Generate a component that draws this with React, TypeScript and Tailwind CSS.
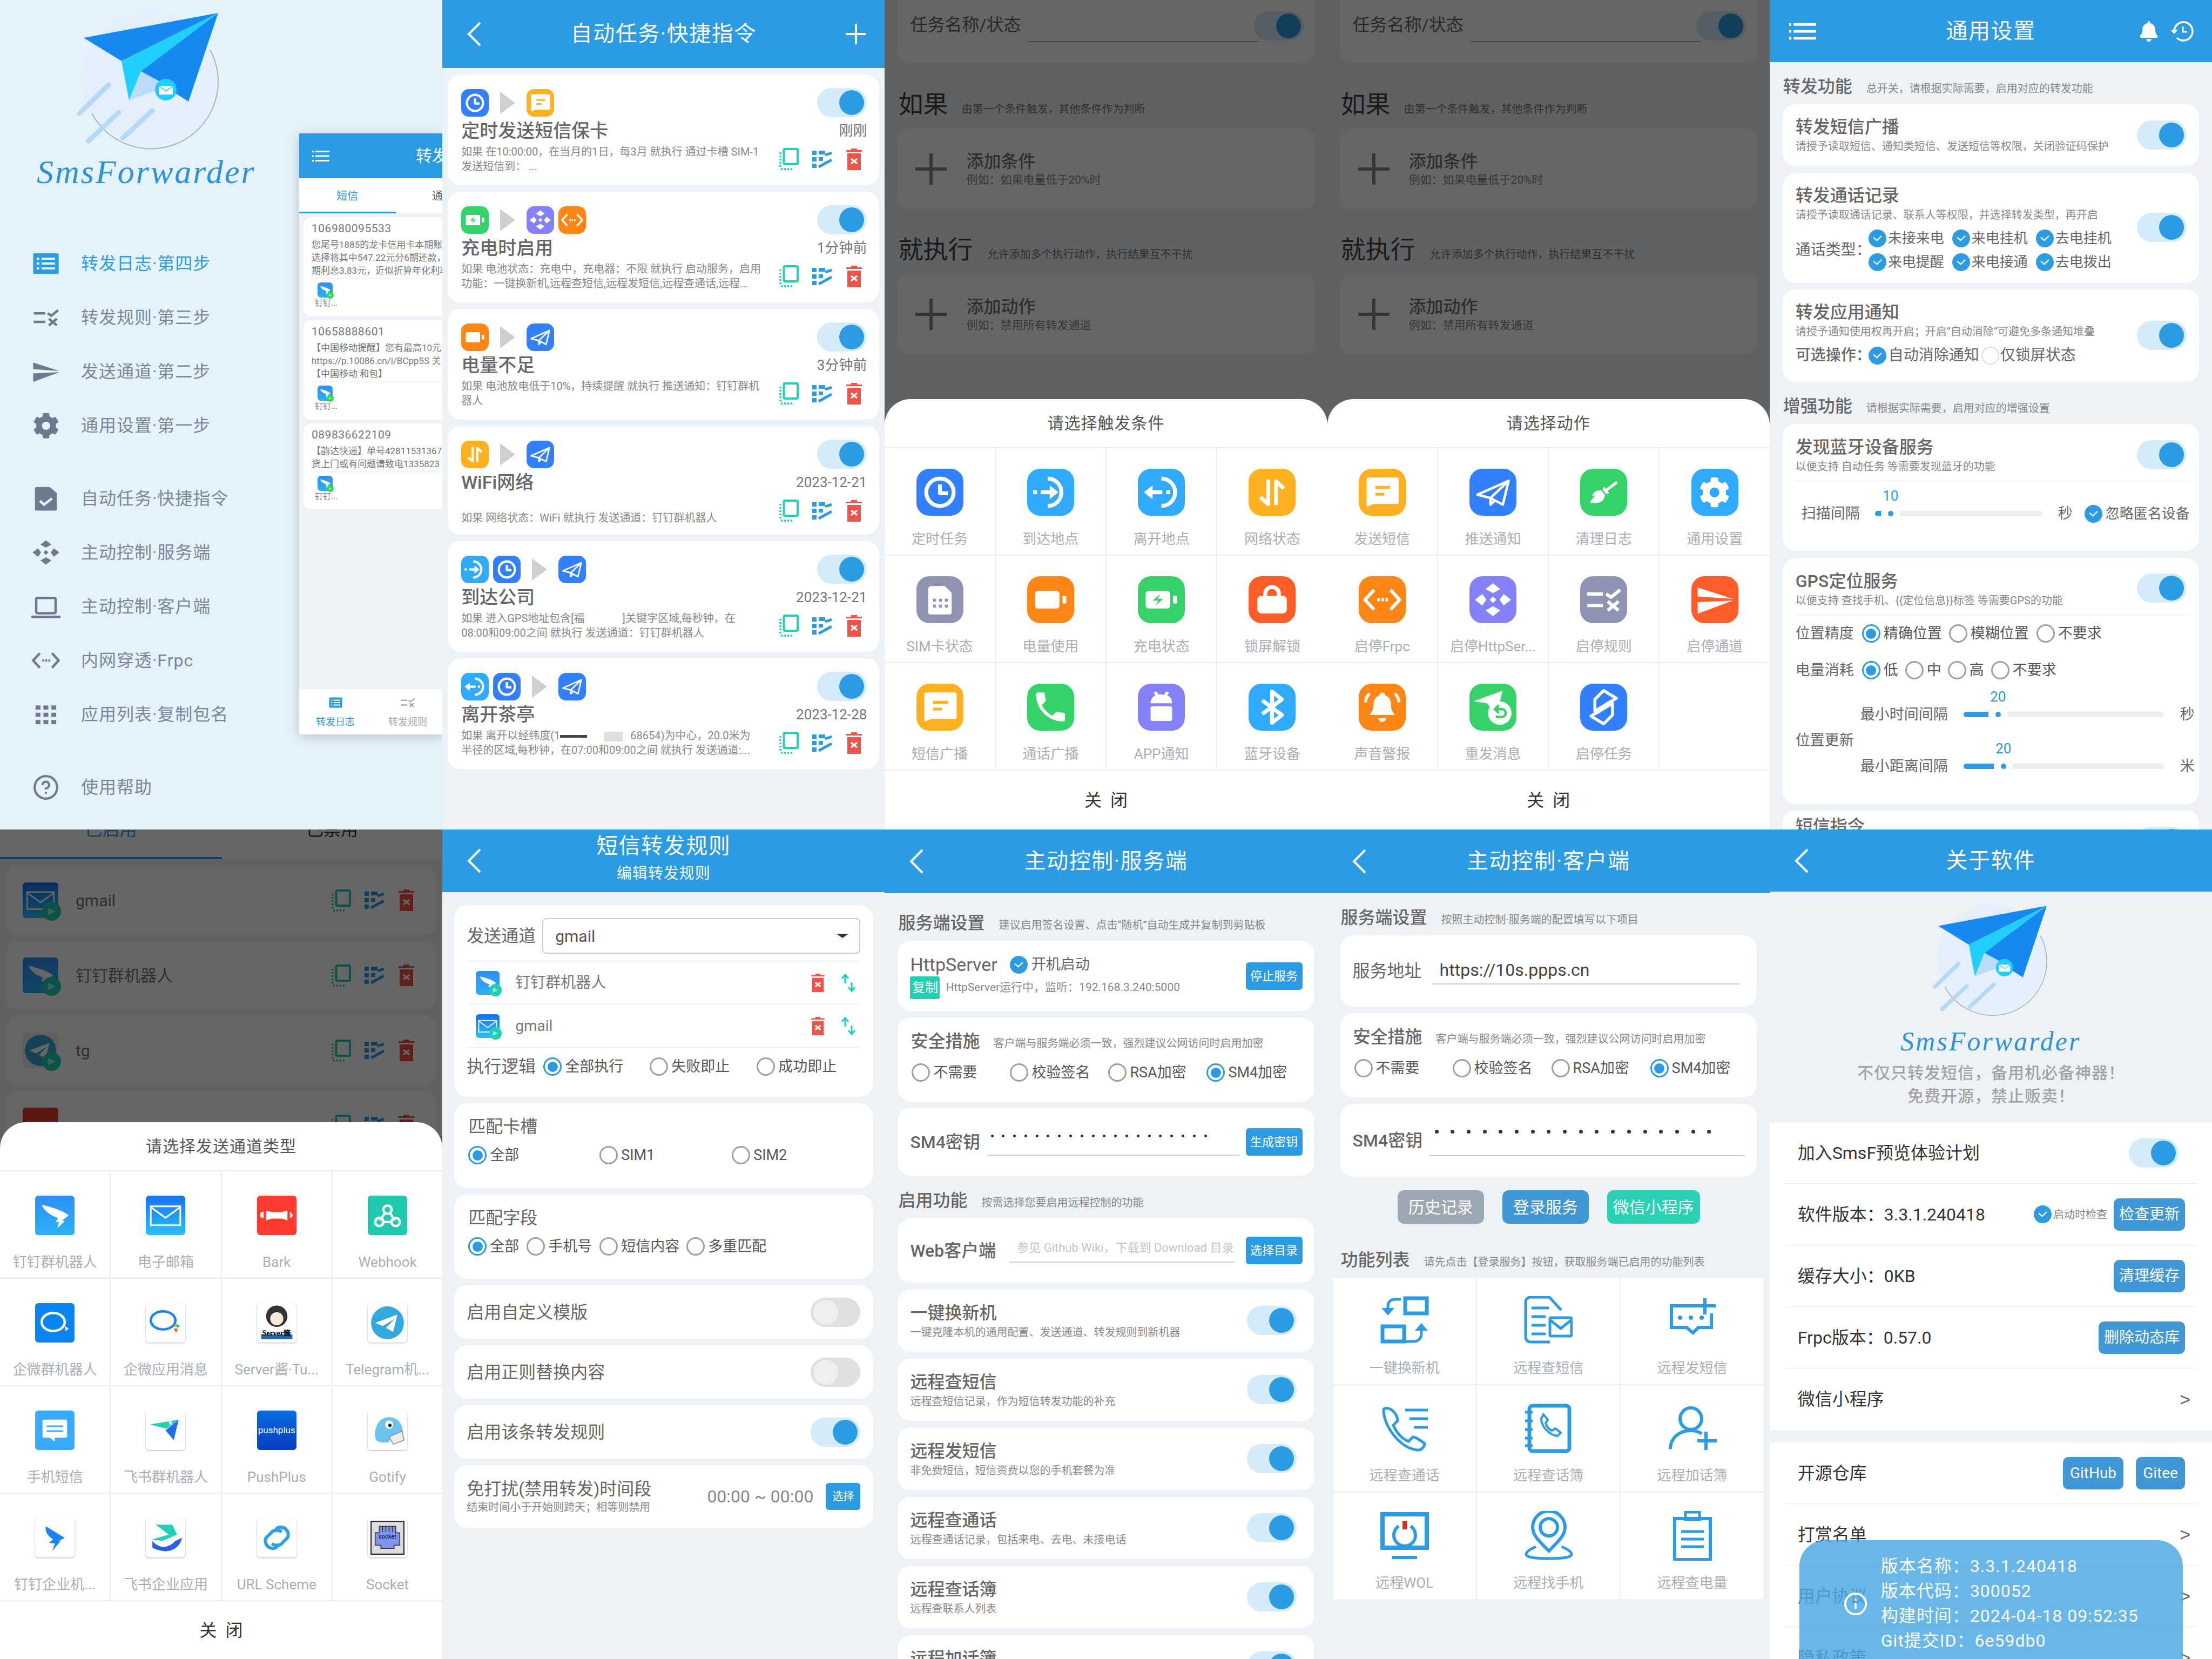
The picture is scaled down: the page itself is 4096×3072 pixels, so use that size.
import type { ReactNode } from "react";
import { FaBell, FaBroom, FaCog } from "react-icons/fa";
import { CircleHelp, Info } from "lucide-react";

const blue = "#2b9ce3";
const narrow = ["frp", "send", "rule", "plane", "http"];

function Glyph({ name, accent = "#3380ff", tile }: { name: string; accent?: string; tile?: boolean }) {
  const line = { fill: "none", stroke: "currentColor", strokeWidth: 4, strokeLinejoin: "round" as const };
  const paths: Record<string, ReactNode> = {
    clock: <><circle cx="24" cy="24" r="14" {...line} /><path d="M24 16v9h8" {...line} /></>,
    arrive: <><path d="M21 10a14 14 0 1 1 0 28" {...line} /><path d="M14 24h12" {...line} /><path d="M23 17l9 7-9 7z" fill="currentColor" /><rect x="6" y="22" width="4" height="4" fill="currentColor" /></>,
    leave: <><path d="M24 10a14 14 0 1 1 0 28" {...line} /><path d="M14 24h11" {...line} /><path d="M6 24l9-7v14z" fill="currentColor" /><rect x="29" y="22" width="4" height="4" fill="currentColor" /></>,
    net: <path d="M20 11v25l-8-7M28 37V13l8 7" {...line} />,
    sim: <><path d="M15 10h14l7 7v20a2 2 0 0 1-2 2H14a2 2 0 0 1-2-2V13a3 3 0 0 1 3-3z" fill="currentColor" /><path d="M17 23h3v3h-3zM23 23h3v3h-3zM29 23h3v3h-3zM17 29h3v3h-3zM23 29h3v3h-3zM29 29h3v3h-3z" fill={accent} /></>,
    battery: <><rect x="8" y="15" width="25" height="18" rx="3" fill="currentColor" /><rect x="36" y="20" width="4" height="8" rx="1" fill="currentColor" /></>,
    charge: <><rect x="8" y="15" width="25" height="18" rx="3" fill="currentColor" /><rect x="36" y="20" width="4" height="8" rx="1" fill="currentColor" /><path d="M23 18l-8 7h6l-3 5 8-7h-6z" fill={accent} /></>,
    lock: <><rect x="9" y="20" width="30" height="18" rx="4" fill="currentColor" /><path d="M17 20v-2a7 7 0 0 1 14 0v2" {...line} /></>,
    sms: <><path d="M10 9h29a2 2 0 0 1 2 2v23a2 2 0 0 1-2 2H15l-7 3V11a2 2 0 0 1 2-2z" fill="currentColor" /><path d="M17 19h15M17 26h9" fill="none" stroke={accent} strokeWidth="3" /></>,
    phone: <path transform="translate(4 4) scale(1.65)" d="M6.62 10.79c1.44 2.83 3.76 5.14 6.59 6.59l2.2-2.2c.27-.27.67-.36 1.02-.24 1.12.37 2.33.57 3.57.57.55 0 1 .45 1 1V20c0 .55-.45 1-1 1-9.39 0-17-7.61-17-17 0-.55.45-1 1-1h3.5c.55 0 1 .45 1 1 0 1.25.2 2.45.57 3.57.11.35.03.74-.25 1.02l-2.2 2.2z" fill="currentColor" />,
    android: <><path d="M13 20c0-4 2-7 5-8l-2-3 3-1 2 3h6l2-3 3 1-2 3c3 1 5 4 5 8z" fill="currentColor" /><rect x="13" y="23" width="22" height="15" rx="2" fill="currentColor" /></>,
    bluetooth: <path d="M14 17l20 15-10 8V8l10 8-20 15" {...line} />,
    plane: <><path d="M5 27L43 10l-7 29-15-8z" {...line} strokeWidth={3} /><path d="M43 10L21 31v8l5-5" {...line} strokeWidth={3} /></>,
    frp: <><path d="M14 12L3 24l11 12M34 12l11 12-11 12" {...line} /><path d="M18 22h3v4h-3zM23 22h3v4h-3zM28 22h3v4h-3z" fill="currentColor" /></>,
    http: <path d="M24 4l9 7-9 5-9-5zM24 44l-9-7 9-5 9 5zM2 24l9-7 5 7-5 7zM46 24l-9-7-5 7 5 7zM24 20l4 4-4 4-4-4z" fill="currentColor" />,
    rule: <><path d="M4 17h19M4 31h19" {...line} /><path d="M27 17l6 4 11-9M29 26l13 11M42 26L29 37" {...line} /></>,
    send: <path d="M3 9l43 14-43-3zM3 27l43-2-43 16z" fill="currentColor" />,
    bell: <><path d="M24 9a3 3 0 0 1 3 3c5 2 6 6 6 10 0 6 3 8 4 10H11c1-2 4-4 4-10 0-4 1-8 6-10a3 3 0 0 1 3-3zM20 35h8a4 4 0 0 1-8 0z" fill="currentColor" /><path d="M7 19c0-4 2-7 4-9M41 19c0-4-2-7-4-9" {...line} strokeWidth={3} /></>,
    resend: <><path d="M4 18L34 7l-4 15-9 2-3-4z" fill="currentColor" /><circle cx="31" cy="30" r="12" fill="currentColor" /><path d="M28 26h5a4 4 0 0 1 0 8h-6M30 22l-4 4 4 4" fill="none" stroke={accent} strokeWidth="2.5" /></>,
    task: <path d="M24 7l13 8-9 5-13 8V16zM24 41l-13-8 9-5 13-8v12z" {...line} strokeWidth={3} />,
    list: <><rect x="3" y="7" width="42" height="34" rx="2" fill="currentColor" /><path d="M9 16h4M9 24h4M9 32h4M17 16h22M17 24h22M17 32h22" stroke={accent} strokeWidth="3.5" /></>,
    doc: <><path d="M9 5h21l12 10v26a3 3 0 0 1-3 3H9a3 3 0 0 1-3-3V8a3 3 0 0 1 3-3z" fill="currentColor" /><path d="M14 28l7 6 13-10" fill="none" stroke={accent} strokeWidth="4" /></>,
    laptop: <><rect x="8" y="10" width="32" height="25" rx="2" {...line} /><path d="M0 41h48" {...line} /></>,
    apps: <path d="M7 9h8v7H7zM20 9h8v7h-8zM33 9h8v7h-8zM7 21h8v7H7zM20 21h8v7h-8zM33 21h8v7h-8zM7 33h8v7H7zM20 33h8v7h-8zM33 33h8v7h-8z" fill="currentColor" />,
  };
  if (name === "broom") return <FaBroom className="w-[58%] h-[58%]" />;
  if (name === "gear") return <FaCog className={tile ? "w-[66%] h-[66%]" : "w-[90%] h-[90%]"} />;
  const small = tile && narrow.includes(name);
  return <svg viewBox="0 0 48 48" className={small ? "w-[84%] h-[84%]" : "w-full h-full"}>{paths[name]}</svg>;
}

type TileDef = [string, string, string];
const T: Record<string, TileDef> = {
  clock: ["bg-[#3380ff]", "clock", "#3380ff"],
  arrive: ["bg-[#30aaff]", "arrive", "#30aaff"],
  leave: ["bg-[#30aaff]", "leave", "#30aaff"],
  net: ["bg-[#ffb11f]", "net", "#ffb11f"],
  sim: ["bg-[#8f94b3]", "sim", "#8f94b3"],
  battery: ["bg-[#ff8614]", "battery", "#ff8614"],
  charge: ["bg-[#35d26a]", "charge", "#35d26a"],
  lock: ["bg-[#ff5c28]", "lock", "#ff5c28"],
  sms: ["bg-[#ffb11f]", "sms", "#ffb11f"],
  phone: ["bg-[#35d26a]", "phone", "#35d26a"],
  android: ["bg-[#8481fb]", "android", "#8481fb"],
  bluetooth: ["bg-[#30aaff]", "bluetooth", "#30aaff"],
  plane: ["bg-[#3380ff]", "plane", "#3380ff"],
  broom: ["bg-[#35d26a]", "broom", "#35d26a"],
  gear: ["bg-[#30aaff]", "gear", "#30aaff"],
  frp: ["bg-[#ff8614]", "frp", "#ff8614"],
  http: ["bg-[#8481fb]", "http", "#8481fb"],
  rule: ["bg-[#8f94b3]", "rule", "#8f94b3"],
  send: ["bg-[#ff5c28]", "send", "#ff5c28"],
  bell: ["bg-[#ff8614]", "bell", "#ff8614"],
  resend: ["bg-[#35d26a]", "resend", "#35d26a"],
  task: ["bg-[#3380ff]", "task", "#3380ff"],
};

function Tile({ id, size = "w-[87px] h-[87px] rounded-[24px]" }: { id: string; size?: string }) {
  const [bg, name, accent] = T[id];
  return (
    <div className={`${bg} ${size} flex items-center justify-center text-white`}>
      <Glyph name={name} accent={accent} tile />
    </div>
  );
}

function Logo({ className }: { className: string }) {
  return (
    <svg viewBox="0 0 270 260" className={className}>
      <circle cx="137" cy="127" r="124" fill="#e3effb" />
      <path d="M249 72A124 124 0 0 1 30 190" fill="none" stroke="#a9b4bd" strokeWidth="2" />
      <path d="M7 190l54-53M24 241l56-53M87 236l55-51" stroke="#b4d8f6" strokeWidth="9" strokeLinecap="round" />
      <path d="M15 50L264 4 85 93z" fill="#1589f0" />
      <path d="M85 93L264 4 121 112 99 166z" fill="#1fd0ff" />
      <path d="M264 4l-55 164-88-56z" fill="#1589f0" />
      <path d="M121 112l-22 54 72-27z" fill="#b9dcfb" />
      <ellipse cx="167" cy="146" rx="20" ry="20" fill="#1fd0ff" />
      <rect x="154" y="139" width="26" height="16" rx="2" fill="#fff" />
      <path d="M154 140l13 8 13-8" fill="none" stroke="#1fd0ff" strokeWidth="1.5" />
    </svg>
  );
}

function Header({ title, sub, h = "h-[116px]", right, menu }: { title: string; sub?: string; h?: string; right?: ReactNode; menu?: boolean }) {
  return (
    <div className={`${h} bg-[#2b9ce3] text-white flex items-center shrink-0`}>
      <div className="w-[120px] pl-[36px] flex items-center">
        {menu ? (
          <svg viewBox="0 0 50 20" className="w-[50px] h-[34px]" preserveAspectRatio="none"><path d="M0 1h4v3H0zM0 8.5h4v3H0zM0 16h4v3H0zM8 1h42v3H8zM8 8.5h42v3H8zM8 16h42v3H8z" fill="#fff" /></svg>
        ) : (
          <svg viewBox="0 0 26 46" className="ml-[10px] w-[26px] h-[46px]"><path d="M24 2L3 23l21 21" fill="none" stroke="#fff" strokeWidth="4" /></svg>
        )}
      </div>
      <div className="flex-1 text-center">
        <div className="text-[40px] leading-[48px] tracking-[1.5px] whitespace-nowrap">{title}</div>
        {sub && <div className="text-[28px] leading-[54px] tracking-[1px]">{sub}</div>}
      </div>
      <div className="w-[120px] flex justify-end pr-[36px]">{right}</div>
    </div>
  );
}

function Card({ className = "", children }: { className?: string; children: ReactNode }) {
  return <div className={`bg-white rounded-[24px] mb-[12px] mx-[24px] ${className}`}>{children}</div>;
}

function Section({ title, sub, className = "" }: { title: string; sub: string; className?: string }) {
  return (
    <div className={`flex items-baseline h-[40px] mb-[13px] pl-[25px] ${className}`}>
      <span className="text-[32px] leading-[40px] text-[#666] font-medium">{title}</span>
      <span className="text-[20px] ml-[26px] text-[#888]">{sub}</span>
    </div>
  );
}

function Toggle({ on = true, className = "" }: { on?: boolean; className?: string }) {
  return (
    <div className={`w-[92px] h-[54px] rounded-full shrink-0 flex items-center px-[5px] ${on ? "bg-[#d4ebfa] justify-end" : "bg-[#e0e0e0] justify-start"} ${className}`}>
      <div className={`w-[46px] h-[46px] rounded-full ${on ? "bg-[#2b9ce3]" : "bg-[#efefef]"}`} />
    </div>
  );
}

function Check({ on = true }: { on?: boolean }) {
  if (!on) return <div className="w-[33px] h-[33px] rounded-full border-[2px] border-[#ddd] shrink-0" />;
  return (
    <div className="w-[33px] h-[33px] rounded-full bg-[#2b9ce3] shrink-0 flex items-center justify-center">
      <svg viewBox="0 0 20 14" className="w-[19px] h-[13px]"><path d="M2 5l7 6 9-9" fill="none" stroke="#fff" strokeWidth="2.5" /></svg>
    </div>
  );
}

function Radio({ label, on, w }: { label: string; on?: boolean; w?: string }) {
  return (
    <div className={`flex items-center gap-[6px] text-[27px] text-[#555] whitespace-nowrap ${w ?? ""}`}>
      <div className={`w-[34px] h-[34px] rounded-full border-[3px] flex items-center justify-center shrink-0 ${on ? "border-[#2b9ce3]" : "border-[#a0a0a0]"}`}>
        {on && <div className="w-[19px] h-[19px] rounded-full bg-[#2b9ce3]" />}
      </div>
      {label}
    </div>
  );
}

function CopyIcon() {
  return (
    <svg viewBox="0 0 36 41" className="w-[36px] h-[41px]">
      <rect x="8.500" y="2" width="25.500" height="28" rx="2" fill="none" stroke="#1fd0b2" strokeWidth="4" />
      <path d="M2 8v3M2 14v3M2 20v3M2 26v3M2 32v3M3 39h3M9 39h3M15 39h3M21 39h3" stroke="#1fd0b2" strokeWidth="3.500" />
    </svg>
  );
}
function EditIcon() {
  return (
    <svg viewBox="0 0 36 34" className="w-[36px] h-[34px]">
      <path d="M0 1h8v8H0zM0 13h8v8H0zM0 25h8v8H0zM12 1h12v7H12zM12 13h8v7h-8z" fill="#2b9ce3" />
      <path d="M12 31l24-13M24 9l12-4" stroke="#2b9ce3" strokeWidth="5" />
    </svg>
  );
}
function DelIcon({ className = "w-[29px] h-[40px]" }: { className?: string }) {
  return (
    <svg viewBox="0 0 29 40" className={className}>
      <path d="M9 0h11v3h9v3H0V3h9z" fill="#f0534a" />
      <path d="M2 9h25v31H2z" fill="#f0534a" />
      <path d="M9 19l11 9M20 19L9 28" stroke="#fff" strokeWidth="3.5" />
    </svg>
  );
}
function Actions({ className }: { className: string }) {
  return (
    <div className={`flex items-center ${className}`}>
      <CopyIcon />
      <div className="ml-[25px]"><EditIcon /></div>
      <div className="ml-[27px]"><DelIcon /></div>
    </div>
  );
}

function Drawer() {
  const items: [string, string, string][][] = [
    [["list", "转发日志·第四步", "a"], ["rule", "转发规则·第三步", ""], ["send", "发送通道·第二步", ""], ["gear", "通用设置·第一步", ""]],
    [["doc", "自动任务·快捷指令", ""], ["http", "主动控制·服务端", ""], ["laptop", "主动控制·客户端", ""], ["frp", "内网穿透·Frpc", ""], ["apps", "应用列表·复制包名", ""]],
    [["help", "使用帮助", ""]],
  ];
  return (
    <div className="w-[554px] shrink-0">
      <div className="h-[438px] pt-[20px] pl-[140px]">
        <Logo className="w-[270px] h-[260px]" />
        <div className="-ml-[72px] text-[62px] leading-[76px] italic text-[#2f90dc] tracking-[3px] [font-family:'Liberation_Serif',serif]">SmsForwarder</div>
      </div>
      {items.map((group, i) => (
        <div key={i} className="mb-[35px]">
          {group.map(([icon, label, active]) => (
            <div key={label} className={`h-[100px] flex items-center pl-[58px] ${active ? "text-[#2b9ce3]" : "text-[#6a7a90]"}`}>
              <div className="w-[54px] h-[54px] flex items-center justify-center shrink-0">
                {icon === "help" ? <CircleHelp className="w-[50px] h-[50px]" strokeWidth={2} /> : <Glyph name={icon} accent="#e4f2fb" />}
              </div>
              <span className={`ml-[38px] text-[32px] tracking-[1px] whitespace-nowrap ${active ? "" : "text-[#7a8798]"}`}>{label}</span>
            </div>
          ))}
        </div>
      ))}
    </div>
  );
}

function Preview() {
  const msgs = [
    { h: "h-[184px]", l: ["106980095533", "您尾号1885的龙卡信用卡本期账单", "选择将其中547.22元分6期还款，每", "期利息3.83元，近似折算年化利率"] },
    { h: "h-[184px]", l: ["10658888601", "【中国移动提醒】您有最高10元", "https://p.10086.cn/i/BCpp5S 关", "【中国移动 和包】"] },
    { h: "h-[159px]", l: ["089836622109", "【韵达快递】单号42811531367", "货上门或有问题请致电1335823"] },
  ];
  return (
    <div className="flex-1 min-w-0 mt-[247px] h-[1113px] overflow-hidden bg-[#eef2f6] shadow-[0_4px_20px_rgba(0,0,0,0.2)] flex flex-col">
      <div className="w-[520px] flex-1 flex flex-col">
        <div className="h-[83px] bg-[#2b9ce3] flex items-center pl-[24px] shrink-0 text-white">
          <svg viewBox="0 0 32 22" className="w-[32px] h-[22px]"><path d="M0 1h3v3H0zM0 9.500h3v3H0zM0 18h3v3H0zM6 1h26v3H6zM6 9.500h26v3H6zM6 18h26v3H6z" fill="#fff" /></svg>
          <span className="ml-[160px] text-[30px]">转发日志</span>
        </div>
        <div className="h-[65px] bg-white flex items-center relative shrink-0 text-[20px]">
          <span className="ml-[69px] text-[#2b9ce3]">短信</span>
          <span className="ml-[137px] text-[#666]">通话</span>
          <div className="absolute bottom-0 left-0 w-[179px] h-[3px] bg-[#2b9ce3]" />
        </div>
        <div className="flex-1 pt-[7px] pl-[8px]">
          {msgs.map((m) => (
            <div key={m.l[0]} className={`${m.h} bg-white rounded-[14px] mb-[7px] px-[15px] pt-[7px] text-[#777] overflow-hidden`}>
              <div className="text-[21px] leading-[28px] mb-[4px] tracking-[0.5px]">{m.l[0]}</div>
              {m.l.slice(1).map((l) => <div key={l} className="text-[17px] leading-[24px] whitespace-nowrap">{l}</div>)}
              <div className="border-t border-[#eee] mt-[2px] pt-[7px] pl-[11px]">
                <Chan id="ding" size="w-[28px] h-[28px]" badge="w-[13px] h-[13px] bg-[#22dd55]" />
                <div className="text-[15px] -ml-[5px] leading-[20px]">钉钉...</div>
              </div>
            </div>
          ))}
        </div>
        <div className="h-[84px] bg-white flex shrink-0 text-[18px] leading-[22px]">
          <div className="ml-[32px] w-[70px] flex flex-col items-center text-[#2b9ce3]">
            <div className="w-[27px] h-[50px] flex items-center"><Glyph name="list" accent="#fff" /></div><span className="whitespace-nowrap">转发日志</span>
          </div>
          <div className="ml-[64px] w-[70px] flex flex-col items-center text-[#aaa]">
            <div className="w-[30px] h-[50px] flex items-center"><Glyph name="rule" /></div><span className="whitespace-nowrap">转发规则</span>
          </div>
        </div>
      </div>
    </div>
  );
}

function TaskList() {
  const tasks = [
    { a: ["clock"], b: ["sms"], t: "定时发送短信保卡", time: "刚刚", d: ["如果 在10:00:00，在当月的1日，每3月 就执行 通过卡槽 SIM-1", "发送短信到：  ..."] },
    { a: ["charge"], b: ["http", "frp"], t: "充电时启用", time: "1分钟前", d: ["如果 电池状态：充电中，充电器：不限 就执行 启动服务，启用", "功能：一键换新机,远程查短信,远程发短信,远程查通话,远程..."] },
    { a: ["battery"], b: ["plane"], t: "电量不足", time: "3分钟前", d: ["如果 电池放电低于10%，持续提醒 就执行 推送通知：钉钉群机", "器人"] },
    { a: ["net"], b: ["plane"], t: "WiFi网络", time: "2023-12-21", d: ["", "如果 网络状态：WiFi 就执行 发送通道：钉钉群机器人"], short: true },
  ];
  return (
    <div className="pt-[12px]">
      {tasks.map((t) => (
        <TaskCard key={t.t} {...t} desc={t.d.map((l) => <div key={l} className="h-[27px]">{l}</div>)} />
      ))}
      <TaskCard a={["arrive", "clock"]} b={["plane"]} t="到达公司" time="2023-12-21" desc={<>
        <div className="h-[27px]">如果 进入GPS地址包含[福<span className="inline-block w-[70px]" />]关键字区域,每秒钟，在</div>
        <div className="h-[27px]">08:00和09:00之间 就执行 发送通道：钉钉群机器人</div>
      </>} />
      <TaskCard a={["leave", "clock"]} b={["plane"]} t="离开茶亭" time="2023-12-28" desc={<>
        <div className="h-[27px]">如果 离开以经纬度(1<span className="inline-block w-[50px] h-[5px] bg-[#444] align-middle" /><span className="inline-block w-[32px]" /><span className="inline-block w-[34px] h-[18px] bg-[#ddd] align-middle" /><span className="inline-block w-[14px]" />68654)为中心，20.0米为</div>
        <div className="h-[27px]">半径的区域,每秒钟，在07:00和09:00之间 就执行 发送通道:...</div>
      </>} />
    </div>
  );
}

function TaskCard({ a, b, t, time, desc, short }: { a: string[]; b: string[]; t: string; time: string; desc: ReactNode; short?: boolean }) {
  const tile = "w-[51px] h-[51px] rounded-[14px]";
  return (
    <div className={`mx-[10px] mb-[12px] bg-white rounded-[24px] flex justify-between pl-[25px] pr-[23px] ${short ? "h-[201px]" : "h-[205px]"}`}>
      <div className="min-w-0">
        <div className="flex items-center gap-[8px] pt-[27px]">
          {a.map((x) => <Tile key={x} id={x} size={tile} />)}
          <svg viewBox="0 0 28 41" className="w-[28px] h-[41px] mx-[13px]"><path d="M0 0l28 20.500L0 41z" fill="#cfcfcf" /></svg>
          {b.map((x) => <Tile key={x} id={x} size={tile} />)}
        </div>
        <div className="text-[34px] leading-[52px] text-[#666] font-medium whitespace-nowrap">{t}</div>
        <div className="text-[20px] leading-[27px] text-[#888] whitespace-nowrap">{desc}</div>
      </div>
      <div className="flex flex-col items-end w-[180px] shrink-0">
        <Toggle className="mt-[25px]" />
        <div className="text-[26px] leading-[50px] text-[#777]">{time}</div>
        <Actions className="mr-[9px] mt-[7px]" />
      </div>
    </div>
  );
}

function Sheet({ title, top, pad, gap, tiles }: { title: string; top: string; pad: string; gap: string; tiles: [ReactNode, string][] }) {
  return (
    <>
      <div className="absolute inset-0 bg-black/60" />
      <div className={`absolute left-0 right-0 bottom-0 ${top} bg-white rounded-t-[48px] flex flex-col`}>
        <div className="h-[89px] flex items-center justify-center text-[30px] tracking-[1px] text-[#555] shrink-0">{title}</div>
        <div className="grid grid-cols-4 gap-[2px] bg-[#ebedf0] py-[2px]">
          {tiles.map(([tile, label], i) => (
            <div key={i} className={`h-[197px] bg-white flex flex-col items-center ${pad}`}>
              {tile}
              <div className={`${gap} text-[26px] leading-[30px] text-[#a9aeb6] whitespace-nowrap`}>{label}</div>
            </div>
          ))}
        </div>
        <div className="flex-1 flex items-center justify-center text-[32px] text-[#333] [word-spacing:8px]">关 闭</div>
      </div>
    </>
  );
}

function TaskBackdrop() {
  const Plus = () => <svg viewBox="0 0 58 58" className="w-[58px] h-[58px] ml-[34px]"><path d="M0 29h58M29 0v58" stroke="#888" strokeWidth="6" /></svg>;
  const Head = ({ t, s, w }: { t: string; s: string; w: string }) => (
    <div className="flex items-baseline pl-[25px] h-[58px] mt-[18px] mb-[16px]">
      <span className={`text-[46px] leading-[58px] text-[#444] ${w}`}>{t}</span>
      <span className="text-[20px] text-[#777]">{s}</span>
    </div>
  );
  const Add = ({ t, s }: { t: string; s: string }) => (
    <div className="mx-[23px] h-[149px] bg-white rounded-[24px] flex items-center">
      <Plus />
      <div className="ml-[36px]">
        <div className="text-[32px] leading-[40px] text-[#777] font-medium">{t}</div>
        <div className="text-[21px] leading-[28px] text-[#888]">{s}</div>
      </div>
    </div>
  );
  return (
    <div>
      <div className="mx-[23px] h-[116px] bg-white rounded-b-[24px] flex items-start pl-[24px] pr-[21px] pt-[21px]">
        <span className="text-[32px] leading-[50px] text-[#666] whitespace-nowrap">任务名称/状态</span>
        <div className="ml-[12px] flex-1 h-[56px] border-b border-[#888] -mr-[8px]" />
        <Toggle />
      </div>
      <div className="h-[30px]" />
      <Head t="如果" s="由第一个条件触发，其他条件作为判断" w="w-[117px]" />
      <Add t="添加条件" s="例如：如果电量低于20%时" />
      <div className="h-[28px]" />
      <Head t="就执行" s="允许添加多个执行动作，执行结果互不干扰" w="w-[165px]" />
      <Add t="添加动作" s="例如：禁用所有转发通道" />
    </div>
  );
}

function Chan({ id, size, badge }: { id: string; size: string; badge?: string }) {
  const white = "bg-white shadow-[0_1px_3px_rgba(0,0,0,0.3)]";
  const defs: Record<string, [string, ReactNode]> = {
    ding: ["bg-gradient-to-b from-[#2e90f5] to-[#2bb0f8]", <path d="M8 11c11 3 24 6 33 13l-8 6 3 1-9 9 2-8-4 0 3-5C20 25 11 19 8 11z" fill="#fff" />],
    mail: ["bg-gradient-to-b from-[#1d71ef] to-[#2cc0fa]", <><rect x="6" y="13" width="36" height="23" fill="none" stroke="#fff" strokeWidth="2" /><path d="M6 14l18 13 18-13" fill="none" stroke="#fff" strokeWidth="2" /></>],
    bark: ["bg-[#ff3b30]", <path d="M4 21l4-2v9l-4-2zM11 18l7 2h12l7-2v12l-7-2H18l-7 2zM40 19l4 5-4 4z" fill="#fff" />],
    hook: ["bg-[#1fc9ae]", <><circle cx="24" cy="17" r="5" fill="none" stroke="#fff" strokeWidth="3" /><circle cx="14" cy="32" r="5" fill="none" stroke="#fff" strokeWidth="3" /><circle cx="34" cy="32" r="5" fill="none" stroke="#fff" strokeWidth="3" /><path d="M21 21l-6 9M27 21l6 9M19 32h10" stroke="#fff" strokeWidth="3" /></>],
    wxbot: ["bg-[#0a84f0]", <><ellipse cx="22" cy="23" rx="14" ry="11" fill="none" stroke="#fff" strokeWidth="3" /><path d="M36 28l5 3-4 3z" fill="#fff" /></>],
    wxapp: [white, <><ellipse cx="21" cy="21" rx="15" ry="11" fill="none" stroke="#1a84f0" strokeWidth="3" /><path d="M33 29l4-4 2 4z" fill="#ffb300" /><path d="M37 25l5 3-4 2z" fill="#22b5e8" /><path d="M34 31l5 0-2 5z" fill="#f4511e" /></>],
    server: [white, <><circle cx="24" cy="16" r="13" fill="#333" /><circle cx="24" cy="19" r="8" fill="#ffe8d8" /><rect x="5" y="38" width="38" height="6" fill="#1a6cb0" /></>],
    tg: [white, <><circle cx="24" cy="24" r="20" fill="#32a8dd" /><path d="M9 24l27-10-5 21-9-5 11-11-15 9z" fill="#fff" /></>],
    phonesms: ["bg-[#38aaff]", <><rect x="9" y="11" width="30" height="22" rx="2" fill="#fff" /><path d="M18 33l6 5v-5z" fill="#fff" /><path d="M14 19h20M14 25h20" stroke="#38aaff" strokeWidth="2" /></>],
    feishu: [white, <><path d="M5 17l35-6-15 11z" fill="#1fd0b2" /><path d="M40 11l-6 25-10-12z" fill="#1f6fe8" /><circle cx="30" cy="15" r="2" fill="#fff" /></>],
    push: ["bg-gradient-to-b from-[#0a6be0] to-[#0a3dc0]", null],
    gotify: [white, <><path d="M10 36c-4-14 3-28 16-28s18 12 16 22c-6-2-14 2-16 8-6 2-12 1-16-2z" fill="#6cc3ee" /><circle cx="26" cy="17" r="5" fill="#fff" /><circle cx="27" cy="18" r="2" fill="#222" /><path d="M26 32l16-7 2 11-13 5z" fill="#eee" stroke="#888" /></>],
    dingent: [white, <path d="M13 10l23 14-7 4 2 0-10 12 3-9-7-1 5-4C15 22 12 16 13 10z" fill="#1a84f0" />],
    fsent: [white, <><path d="M8 28c8 9 18 10 28 0l8-4c-2 12-14 18-24 16-5-1-9-2-12-4z" fill="#2a5fe8" /><path d="M8 26l12 2 18-8-6-12H12l16 12z" fill="#1fd0b2" /></>],
    link: [white, <path d="M21 16l4-4a9 9 0 0 1 12 12l-7 7a9 9 0 0 1-12 0M27 32l-4 4a9 9 0 0 1-12-12l7-7a9 9 0 0 1 12 0" fill="none" stroke="#2f9fe0" strokeWidth="4" />],
    socket: [white, <><rect x="4" y="4" width="40" height="40" fill="#ddd" stroke="#333" strokeWidth="1.500" /><path d="M14 10h20v8h5v15h-7v4H16v-4H9V18h5z" fill="#7f94f0" stroke="#333" /><path d="M18 10v7M22 10v7M26 10v7M30 10v7" stroke="#333" /></>],
    tgdim: ["bg-[#eee]", <><circle cx="24" cy="24" r="21" fill="#32a8dd" /><path d="M9 24l27-10-5 21-9-5 11-11-15 9z" fill="#fff" /></>],
    red: ["bg-[#e33b2e]", null],
  };
  const [bg, draw] = defs[id];
  return (
    <div className={`relative ${size} ${bg} rounded-[6px]`}>
      {id === "push" && <div className="absolute inset-0 flex items-center justify-center text-white text-[17px]">pushplus</div>}
      {id === "server" && <div className="absolute left-0 right-0 bottom-[9px] text-center text-[14px] font-bold text-black leading-[16px] [font-family:'Liberation_Serif',serif]">Server酱</div>}
      {id === "socket" && <div className="absolute left-0 right-0 top-[28px] text-center text-[11px] text-black leading-[14px]">socket</div>}
      {draw && <svg viewBox="0 0 48 48" className="w-full h-full">{draw}</svg>}
      {badge && (
        <div className={`absolute -right-[8%] -bottom-[8%] rounded-full flex items-center justify-center ${badge}`}>
          <div className="w-[40%] h-[40%] bg-white/60 [clip-path:polygon(0_0,100%_50%,0_100%)]" />
        </div>
      )}
    </div>
  );
}

function ChannelPanel() {
  const size = "w-[73px] h-[73px]";
  const rows: [string, string][] = [
    ["ding", "钉钉群机器人"], ["mail", "电子邮箱"], ["bark", "Bark"], ["hook", "Webhook"],
    ["wxbot", "企微群机器人"], ["wxapp", "企微应用消息"], ["server", "Server酱·Tu..."], ["tg", "Telegram机..."],
    ["phonesms", "手机短信"], ["feishu", "飞书群机器人"], ["push", "PushPlus"], ["gotify", "Gotify"],
    ["dingent", "钉钉企业机..."], ["fsent", "飞书企业应用"], ["link", "URL Scheme"], ["socket", "Socket"],
  ];
  const list: [string, string][] = [["mail", "gmail"], ["ding", "钉钉群机器人"], ["tgdim", "tg"], ["red", ""]];
  return (
    <>
      <div className="h-[55px] bg-white flex text-[32px] relative">
        <div className="w-[411px] text-center -mt-[20px] leading-[40px] text-[#2b9ce3]">已启用</div>
        <div className="w-[408px] text-center -mt-[20px] leading-[40px] text-[#333]">已禁用</div>
        <div className="absolute left-0 bottom-0 w-[411px] h-[4px] bg-[#2b9ce3]" />
      </div>
      <div className="pt-[12px] bg-[#edf2f7] h-full">
        {list.map(([id, name]) => (
          <div key={id} className="mx-[11px] h-[128px] mb-[11px] bg-white rounded-[24px] flex items-center pl-[31px] pr-[41px]">
            <Chan id={id} size="w-[66px] h-[66px]" badge="w-[35px] h-[35px] bg-[#1fd0b2]" />
            <span className="ml-[32px] flex-1 text-[30px] text-[#777]">{name}</span>
            <Actions className="" />
          </div>
        ))}
      </div>
      <Sheet title="请选择发送通道类型" top="top-[542px]" pad="pt-[45px]" gap="mt-[35px]" tiles={rows.map(([id, l]) => [<Chan id={id} size={size} />, l])} />
    </>
  );
}

function Settings() {
  const calls = [["未接来电", "来电挂机", "去电挂机"], ["来电提醒", "来电接通", "去电拨出"]];
  const Slider = ({ track, fill, thumb, label }: { track: string; fill: string; thumb: string; label: string }) => (
    <div className={`relative h-[10px] bg-[#eeeeee] rounded-full shrink-0 ${track}`}>
      <div className={`absolute left-0 top-0 h-full bg-[#2b9ce3] rounded-l-full ${fill}`} />
      <div className={`absolute -top-[13px] -translate-x-1/2 w-[36px] h-[36px] rounded-full bg-white shadow-[0_0_3px_rgba(0,0,0,0.1)] flex items-center justify-center ${thumb}`}>
        <div className="w-[10px] h-[10px] rounded-full bg-[#2b9ce3]" />
        <div className="absolute -top-[30px] text-[26px] leading-[30px] text-[#2b9ce3]">{label}</div>
      </div>
    </div>
  );
  const Title = ({ t, d }: { t: string; d: string }) => (
    <>
      <div className="text-[32px] leading-[38px] text-[#666] font-medium">{t}</div>
      <div className="text-[20px] leading-[28px] mt-[3px] text-[#888] whitespace-nowrap">{d}</div>
    </>
  );
  return (
    <>
      <Header title="通用设置" h="h-[115px]" menu right={
        <div className="flex items-center gap-[20px] -mr-[5px]">
          <FaBell className="w-[36px] h-[38px] text-white shrink-0" />
          <svg viewBox="0 0 48 40" className="w-[48px] h-[40px] shrink-0"><path d="M9 20a17 17 0 1 1 5 12" fill="none" stroke="#fff" strokeWidth="3.500" /><path d="M2 17h14l-7 8z" fill="#fff" /><path d="M25 11v10h8" fill="none" stroke="#fff" strokeWidth="3" /></svg>
        </div>
      } />
      <Section title="转发功能" sub="总开关，请根据实际需要，启用对应的转发功能" className="mt-[25px]" />
      <Card className="h-[114px] !mb-[14px] pl-[24px] pr-[23px] pt-[23px] flex justify-between">
        <div><Title t="转发短信广播" d="请授予读取短信、通知类短信、发送短信等权限，关闭验证码保护" /></div>
        <Toggle className="mt-[7px]" />
      </Card>
      <Card className="h-[203px] pl-[24px] pr-[23px] pt-[22px] flex justify-between">
        <div>
          <Title t="转发通话记录" d="请授予读取通话记录、联系人等权限，并选择转发类型，再开启" />
          <div className="flex items-center mt-[7px]">
            <div className="w-[135px] text-[28px] text-[#666] whitespace-nowrap">通话类型：</div>
            <div>
              {calls.map((row) => (
                <div key={row[0]} className="flex h-[44px] items-center">
                  {row.map((c) => (
                    <div key={c} className="w-[155px] flex items-center gap-[3px] text-[26px] text-[#666] whitespace-nowrap"><Check />{c}</div>
                  ))}
                </div>
              ))}
            </div>
          </div>
        </div>
        <Toggle className="mt-[51px]" />
      </Card>
      <Card className="h-[171px] pl-[24px] pr-[23px] pt-[23px] flex justify-between">
        <div>
          <Title t="转发应用通知" d="请授予通知使用权再开启；开启“自动消除”可避免多条通知堆叠" />
          <div className="flex items-center mt-[8px] h-[44px] text-[28px] text-[#666]">
            <div className="w-[135px] font-medium whitespace-nowrap">可选操作：</div>
            <Check /><span className="ml-[4px] w-[172px] whitespace-nowrap">自动消除通知</span>
            <Check on={false} /><span className="ml-[2px] whitespace-nowrap">仅锁屏状态</span>
          </div>
        </div>
        <Toggle className="mt-[35px]" />
      </Card>
      <Section title="增强功能" sub="请根据实际需要，启用对应的增强设置" className="mt-[25px]" />
      <Card className="h-[235px] !mb-[13px]">
        <div className="flex justify-between pl-[24px] pr-[23px] pt-[24px]">
          <div><Title t="发现蓝牙设备服务" d="以便支持 自动任务 等需要发现蓝牙的功能" /></div>
          <Toggle className="mt-[6px]" />
        </div>
        <div className="mx-[23px] mt-[12px] border-t border-[#eee]" />
        <div className="flex items-center mt-[42px] h-[36px] pl-[35px] text-[27px] text-[#666] whitespace-nowrap">
          <span className="w-[136px]">扫描间隔</span>
          <Slider track="w-[310px]" fill="w-[12px]" thumb="left-[29px]" label="10" />
          <span className="ml-[29px] w-[49px]">秒</span>
          <Check /><span className="ml-[6px] text-[26px]">忽略匿名设备</span>
        </div>
      </Card>
      <Card className="h-[456px]">
        <div className="flex justify-between pl-[24px] pr-[23px] pt-[24px]">
          <div><Title t="GPS定位服务" d="以便支持 查找手机、{{定位信息}}标签 等需要GPS的功能" /></div>
          <Toggle className="mt-[5px]" />
        </div>
        <div className="mx-[23px] mt-[12px] border-t border-[#eee]" />
        <div className="pl-[24px] text-[27px] text-[#666]">
          <div className="h-[68px] flex items-center">
            <span className="w-[123px]">位置精度</span>
            <Radio label="精确位置" on w="w-[161px]" /><Radio label="模糊位置" w="w-[162px]" /><Radio label="不要求" />
          </div>
          <div className="h-[68px] flex items-center">
            <span className="w-[123px]">电量消耗</span>
            <Radio label="低" on w="w-[80px]" /><Radio label="中" w="w-[79px]" /><Radio label="高" w="w-[80px]" /><Radio label="不要求" />
          </div>
          <div className="flex items-center">
            <span className="w-[120px]">位置更新</span>
            <div>
              <div className="h-[96px] flex items-center whitespace-nowrap">
                <span className="w-[191px]">最小时间间隔</span>
                <Slider track="w-[371px]" fill="w-[46px]" thumb="left-[64px]" label="20" />
                <span className="ml-[30px]">秒</span>
              </div>
              <div className="h-[96px] flex items-center whitespace-nowrap">
                <span className="w-[191px]">最小距离间隔</span>
                <Slider track="w-[371px]" fill="w-[57px]" thumb="left-[74px]" label="20" />
                <span className="ml-[30px]">米</span>
              </div>
            </div>
          </div>
        </div>
      </Card>
      <Card className="h-[100px] pl-[24px] pr-[23px] pt-[10px] flex justify-between">
        <div className="text-[32px] leading-[38px] text-[#666] font-medium">短信指令</div>
        <Toggle className="mt-[20px]" />
      </Card>
    </>
  );
}

function Rule() {
  const Row = ({ id, name }: { id: string; name: string }) => (
    <div className="h-[80px] border-b border-[#eee] flex items-center pl-[17px]">
      <Chan id={id} size="w-[44px] h-[44px]" badge="w-[23px] h-[23px] bg-[#1fd0b2]" />
      <span className="ml-[29px] flex-1 text-[28px] text-[#777]">{name}</span>
      <DelIcon className="w-[25px] h-[34px]" />
      <svg viewBox="0 0 28 34" className="w-[28px] h-[34px] ml-[30px] mr-[8px]"><path d="M8 18V4M2 9l6-7 6 7M20 16v14M14 25l6 7 6-7" fill="none" stroke="#1fd0b2" strokeWidth="3" /></svg>
    </div>
  );
  const Switch = ({ t, on = false }: { t: string; on?: boolean }) => (
    <div className="mx-[22px] mb-[12px] h-[99px] bg-white rounded-[24px] flex items-center justify-between px-[23px] text-[32px] text-[#666]">{t}<Toggle on={on} /></div>
  );
  return (
    <>
      <Header title="短信转发规则" sub="编辑转发规则" />
      <div className="h-[24px]" />
      <div className="mx-[22px] mb-[12px] h-[355px] bg-white rounded-[24px] px-[23px] pt-[24px]">
        <div className="flex items-center h-[66px] pb-0">
          <span className="w-[140px] text-[32px] text-[#666]">发送通道</span>
          <div className="flex-1 h-[66px] rounded-[8px] border-[2px] border-[#ccc] flex items-center justify-between pl-[22px] pr-[20px] text-[30px] text-[#555]">
            gmail
            <div className="w-0 h-0 border-l-[11px] border-r-[11px] border-t-[8px] border-l-transparent border-r-transparent border-t-[#333]" />
          </div>
        </div>
        <div className="mt-[13px] border-t border-[#eee]">
          <Row id="ding" name="钉钉群机器人" />
          <Row id="mail" name="gmail" />
        </div>
        <div className="flex items-center h-[70px] text-[32px] text-[#666]">
          <span className="w-[142px] shrink-0">执行逻辑</span>
          <Radio label="全部执行" on w="w-[197px]" /><Radio label="失败即止" w="w-[198px]" /><Radio label="成功即止" />
        </div>
      </div>
      <div className="mx-[22px] mb-[12px] h-[157px] bg-white rounded-[24px] pl-[26px] pt-[22px]">
        <div className="text-[32px] leading-[42px] text-[#666]">匹配卡槽</div>
        <div className="flex mt-[12px]"><Radio label="全部" on w="w-[243px]" /><Radio label="SIM1" w="w-[245px]" /><Radio label="SIM2" /></div>
      </div>
      <div className="mx-[22px] mb-[12px] h-[156px] bg-white rounded-[24px] pl-[26px] pt-[22px]">
        <div className="text-[32px] leading-[42px] text-[#666]">匹配字段</div>
        <div className="flex mt-[12px]"><Radio label="全部" on w="w-[108px]" /><Radio label="手机号" w="w-[135px]" /><Radio label="短信内容" w="w-[161px]" /><Radio label="多重匹配" /></div>
      </div>
      <Switch t="启用自定义模版" />
      <Switch t="启用正则替换内容" />
      <Switch t="启用该条转发规则" on />
      <div className="mx-[22px] h-[116px] bg-white rounded-[24px] flex items-center justify-between px-[23px]">
        <div>
          <div className="text-[32px] leading-[40px] text-[#666]">免打扰(禁用转发)时间段</div>
          <div className="text-[20px] leading-[28px] text-[#888]">结束时间小于开始则跨天；相等则禁用</div>
        </div>
        <div className="flex items-center">
          <span className="text-[32px] text-[#888] mr-[23px] whitespace-nowrap">00:00 ~ 00:00</span>
          <Btn className="w-[64px] h-[50px] text-[20px] bg-[#2b9ce3]">选择</Btn>
        </div>
      </div>
    </>
  );
}

function Btn({ className, children }: { className: string; children: ReactNode }) {
  return <div className={`rounded-[6px] text-white flex items-center justify-center shrink-0 whitespace-nowrap ${className}`}>{children}</div>;
}

function SecCard({ children }: { children: ReactNode }) {
  return (
    <Card className="h-[156px] pl-[24px] pt-[24px]">
      <div className="flex items-baseline">
        <span className="text-[32px] leading-[40px] text-[#666] font-medium">安全措施</span>
        <span className="ml-[25px] text-[20px] text-[#888]">客户端与服务端必须一致，强烈建议公网访问时启用加密</span>
      </div>
      <div className="flex mt-[18px] pl-[2px]">{children}</div>
    </Card>
  );
}

function Dots({ n, gap, dot, className }: { n: number; gap: string; dot: string; className: string }) {
  return (
    <div className={`flex ${gap} ${className}`}>
      {Array.from({ length: n }, (_, i) => <div key={i} className={`${dot} rounded-full bg-[#333] shrink-0`} />)}
    </div>
  );
}

function Server() {
  const toggles = [
    ["一键换新机", "一键克隆本机的通用配置、发送通道、转发规则到新机器"],
    ["远程查短信", "远程查短信记录，作为短信转发功能的补充"],
    ["远程发短信", "非免费短信，短信资费以您的手机套餐为准"],
    ["远程查通话", "远程查通话记录，包括来电、去电、未接电话"],
    ["远程查话簿", "远程查联系人列表"],
    ["远程加话簿", ""],
  ];
  const btn = "w-[105px] h-[51px] text-[22px] bg-[#2b9ce3]";
  return (
    <>
      <Header title="主动控制·服务端" h="h-[118px]" />
      <Section title="服务端设置" sub="建议启用签名设置、点击“随机”自动生成并复制到剪贴板" className="mt-[35px]" />
      <Card className="h-[130px] flex justify-between items-center pl-[23px] pr-[22px]">
        <div>
          <div className="flex items-center h-[44px]">
            <span className="text-[34px] text-[#666]">HttpServer</span>
            <div className="ml-[23px]"><Check /></div>
            <span className="ml-[7px] text-[27px] text-[#666]">开机启动</span>
          </div>
          <div className="flex items-center">
            <div className="w-[55px] h-[42px] bg-[#1fd1b0] rounded-[4px] text-white text-[24px] flex items-center justify-center">复制</div>
            <span className="ml-[11px] text-[21px] text-[#888] whitespace-nowrap">HttpServer运行中，监听：192.168.3.240:5000</span>
          </div>
        </div>
        <Btn className={btn}>停止服务</Btn>
      </Card>
      <SecCard>
        <Radio label="不需要" w="w-[182px]" /><Radio label="校验签名" w="w-[182px]" /><Radio label="RSA加密" w="w-[182px]" /><Radio label="SM4加密" on />
      </SecCard>
      <Card className="h-[125px] flex items-center pl-[23px] pr-[22px]">
        <span className="w-[143px] text-[32px] text-[#666] font-medium">SM4密钥</span>
        <div className="w-[470px] h-[50px] border-b-[2px] border-[#ccc] pl-[7px]">
          <Dots n={20} gap="gap-[15.800px]" dot="w-[5px] h-[5px]" className="mt-[11px]" />
        </div>
        <Btn className={`${btn} ml-[12px]`}>生成密钥</Btn>
      </Card>
      <Section title="启用功能" sub="按需选择您要启用远程控制的功能" className="mt-[26px]" />
      <Card className="h-[119px] !mb-[13px] flex items-center pl-[23px] pr-[22px]">
        <span className="w-[185px] text-[32px] text-[#666] font-medium whitespace-nowrap">Web客户端</span>
        <div className="w-[419px] h-[44px] border-b-[2px] border-[#ccc] pl-[14px] text-[22px] text-[#c4c4c4] whitespace-nowrap overflow-hidden">参见 Github Wiki，下载到 Download 目录</div>
        <Btn className={`${btn} ml-[21px]`}>选择目录</Btn>
      </Card>
      {toggles.map(([t, d]) => (
        <Card key={t} className="h-[115px] !mb-[13px] flex justify-between pl-[23px] pr-[33px] pt-[24px]">
          <div>
            <div className="text-[32px] leading-[38px] text-[#666] font-medium">{t}</div>
            <div className="text-[20px] leading-[28px] mt-[3px] text-[#888]">{d}</div>
          </div>
          <Toggle className="mt-[6px]" />
        </Card>
      ))}
    </>
  );
}

function Remote({ name }: { name: string }) {
  const s = { fill: "none", stroke: blue, strokeWidth: 5 };
  const draws: Record<string, ReactNode> = {
    swap: <><path d="M46 4h40v28H46z" {...s} strokeWidth={7} /><path d="M4 42h40v28H4z" {...s} strokeWidth={7} transform="translate(0 14)" /><path d="M38 6H26a12 12 0 0 0-12 12v8" {...s} /><path d="M2 22h24L14 36z" fill={blue} /><path d="M48 84h14a14 14 0 0 0 14-14v-8" {...s} /><path d="M64 64l12-14 12 14z" fill={blue} /></>,
    docmail: <><path d="M48 85H12a9 9 0 0 1-9-9V11a9 9 0 0 1 9-9h35l22 24" {...s} /><path d="M14 22h32M14 38h26M14 54h26M14 70h26" {...s} /><rect x="48" y="40" width="40" height="34" rx="2" {...s} /><path d="M48 44l20 16 20-16" {...s} /></>,
    smsplus: <><path d="M52 18H6v40h28l12 10 10-10h24V32" {...s} strokeWidth={6} /><circle cx="22" cy="40" r="4" fill={blue} /><circle cx="42" cy="40" r="4" fill={blue} /><circle cx="62" cy="40" r="4" fill={blue} /><path d="M68 4v30M52 18h36" {...s} strokeWidth={6} /></>,
    phonelist: <><path d="M6 12c0 30 30 70 62 74 8 1 14-6 14-12-8-6-16-12-22-12l-8 8c-14-6-22-16-28-30l8-8c0-8-6-18-14-22C12 8 6 8 6 12z" {...s} /><path d="M46 12h42M54 28h34M62 44h26" {...s} /></>,
    book: <><rect x="10" y="4" width="74" height="84" rx="6" {...s} strokeWidth={7} /><path d="M2 16h14M2 32h14M2 48h14M2 64h14M2 78h14" {...s} /><path d="M32 28c0 14 14 30 30 32l6-6-10-8-6 4c-6-2-10-8-12-14l4-6-8-10z" {...s} strokeWidth={4} /></>,
    userplus: <><circle cx="42" cy="28" r="20" {...s} strokeWidth={6} /><path d="M4 84c0-20 16-34 38-34 8 0 14 2 20 6" {...s} strokeWidth={6} /><path d="M70 52v34M54 69h36" {...s} strokeWidth={6} /></>,
    wol: <><rect x="4" y="6" width="82" height="62" {...s} strokeWidth={8} /><path d="M22 86h46" {...s} strokeWidth={6} /><path d="M34 28a20 20 0 1 0 22 0" {...s} strokeWidth={6} /><rect x="41" y="18" width="8" height="16" fill="#e02b1c" /></>,
    pin: <><path d="M46 74C26 54 16 44 16 30a30 30 0 0 1 60 0c0 14-10 24-30 44z" {...s} strokeWidth={6} /><circle cx="46" cy="30" r="16" {...s} strokeWidth={6} /><path d="M22 66C8 72 4 76 4 80c0 6 18 8 42 8s42-2 42-8c0-4-4-8-18-14" {...s} /></>,
    clip: <><rect x="12" y="14" width="66" height="76" {...s} strokeWidth={6} /><rect x="32" y="2" width="26" height="14" {...s} /><path d="M24 38h42M24 52h42M24 66h42" {...s} /></>,
  };
  return <svg viewBox="0 0 90 92" className="w-[90px] h-[92px]">{draws[name]}</svg>;
}

function Client() {
  const grid = [["swap", "一键换新机"], ["docmail", "远程查短信"], ["smsplus", "远程发短信"], ["phonelist", "远程查通话"], ["book", "远程查话簿"], ["userplus", "远程加话簿"], ["wol", "远程WOL"], ["pin", "远程找手机"], ["clip", "远程查电量"]];
  return (
    <>
      <Header title="主动控制·客户端" h="h-[118px]" />
      <Section title="服务端设置" sub="按照主动控制·服务端的配置填写以下项目" className="mt-[25px]" />
      <Card className="h-[132px] flex items-center pl-[23px] pr-[32px]">
        <span className="w-[147px] text-[32px] text-[#666] shrink-0">服务地址</span>
        <div className="flex-1 h-[50px] border-b-[2px] border-[#ccc] pl-[14px] text-[32px] leading-[46px] text-[#444]">https://10s.ppps.cn</div>
      </Card>
      <SecCard>
        <Radio label="不需要" w="w-[182px]" /><Radio label="校验签名" w="w-[183px]" /><Radio label="RSA加密" w="w-[183px]" /><Radio label="SM4加密" on />
      </SecCard>
      <Card className="h-[135px] flex items-center pl-[23px] pr-[22px]">
        <span className="w-[142px] text-[32px] text-[#666] font-medium">SM4密钥</span>
        <div className="flex-1 h-[58px] border-b-[2px] border-[#ccc] pl-[10px]">
          <Dots n={18} gap="gap-[22.700px]" dot="w-[7px] h-[7px]" className="mt-[9px]" />
        </div>
      </Card>
      <div className="flex justify-center gap-[34px] mt-[25px] ml-[1px]">
        <Btn className="w-[160px] h-[62px] text-[30px] rounded-[12px] bg-[#9ca8b4]">历史记录</Btn>
        <Btn className="w-[160px] h-[62px] text-[30px] rounded-[12px] bg-[#3f97d6]">登录服务</Btn>
        <Btn className="w-[172px] h-[62px] text-[30px] rounded-[12px] bg-[#2ad0b2]">微信小程序</Btn>
      </div>
      <Section title="功能列表" sub="请先点击【登录服务】按钮，获取服务端已启用的功能列表" className="mt-[47px]" />
      <div className="mx-[11px] grid grid-cols-3 gap-[2px] bg-[#ebedf0]">
        {grid.map(([icon, label]) => (
          <div key={label} className="h-[197px] bg-white flex flex-col items-center pt-[34px]">
            <Remote name={icon} />
            <div className="mt-[26px] text-[26px] leading-[30px] text-[#a9aeb6]">{label}</div>
          </div>
        ))}
      </div>
    </>
  );
}

function About() {
  const Row = ({ children, last }: { children: ReactNode; last?: boolean }) => (
    <div className={`h-[114px] mx-[28px] pl-[24px] flex items-center justify-between text-[32px] text-[#333] ${last ? "" : "border-b border-[#eee]"}`}>{children}</div>
  );
  const B = ({ w, t }: { w: string; t: string }) => <Btn className={`${w} h-[60px] text-[28px] rounded-[10px] bg-[#3f97d6]`}>{t}</Btn>;
  const Chev = () => <span className="text-[34px] text-[#666] mr-[12px] [font-family:'Liberation_Sans',sans-serif]">&gt;</span>;
  return (
    <>
      <Header title="关于软件" h="h-[115px]" />
      <div className="h-[427px] flex flex-col items-center pt-[23px]">
        <Logo className="w-[218px] h-[210px]" />
        <div className="mt-[14px] text-[50px] leading-[60px] italic text-[#2f90dc] tracking-[3px] [font-family:'Liberation_Serif',serif]">SmsForwarder</div>
        <div className="mt-[7px] ml-[1px] text-[30px] leading-[43px] tracking-[1px] text-[#a3a3a3] text-center font-medium whitespace-nowrap">不仅只转发短信，备用机必备神器！<br />免费开源，禁止贩卖！</div>
      </div>
      <div className="bg-white">
        <Row><span className="whitespace-nowrap">加入SmsF预览体验计划</span><Toggle className="mr-[34px]" /></Row>
        <Row>
          <span className="whitespace-nowrap">软件版本：3.3.1.240418</span>
          <div className="flex items-center mr-[22px]"><Check /><span className="ml-[3px] mr-[12px] text-[20px] text-[#888] whitespace-nowrap">启动时检查</span><B w="w-[132px]" t="检查更新" /></div>
        </Row>
        <Row><span>缓存大小：0KB</span><div className="mr-[22px]"><B w="w-[132px]" t="清理缓存" /></div></Row>
        <Row><span>Frpc版本：0.57.0</span><div className="mr-[22px]"><B w="w-[160px]" t="删除动态库" /></div></Row>
        <Row last><span>微信小程序</span><Chev /></Row>
      </div>
      <div className="h-[23px]" />
      <div className="bg-white">
        <Row><span>开源仓库</span><div className="flex gap-[23px] mr-[22px]"><B w="w-[112px]" t="GitHub" /><B w="w-[91px]" t="Gitee" /></div></Row>
        <Row><span>打赏名单</span><Chev /></Row>
        <Row><span>用户协议</span><Chev /></Row>
        <Row><span>隐私政策</span><Chev /></Row>
      </div>
      <div className="absolute left-[55px] right-[54px] top-[1316px] h-[280px] rounded-[48px] bg-[#4faae5]/85 flex text-white text-[32px] leading-[46px] tracking-[1px] pl-[81px] pt-[25px]">
        <Info className="w-[46px] h-[46px] mt-[70px] shrink-0" />
        <div className="ml-[24px] whitespace-nowrap">
          <div>版本名称：3.3.1.240418</div>
          <div>版本代码：300052</div>
          <div>构建时间：2024-04-18 09:52:35</div>
          <div>Git提交ID：6e59db0</div>
        </div>
      </div>
    </>
  );
}

const triggerTiles: [string, string][] = [
  ["clock", "定时任务"], ["arrive", "到达地点"], ["leave", "离开地点"], ["net", "网络状态"],
  ["sim", "SIM卡状态"], ["battery", "电量使用"], ["charge", "充电状态"], ["lock", "锁屏解锁"],
  ["sms", "短信广播"], ["phone", "通话广播"], ["android", "APP通知"], ["bluetooth", "蓝牙设备"],
];
const actionTiles: [string, string][] = [
  ["sms", "发送短信"], ["plane", "推送通知"], ["broom", "清理日志"], ["gear", "通用设置"],
  ["frp", "启停Frpc"], ["http", "启停HttpSer..."], ["rule", "启停规则"], ["send", "启停通道"],
  ["bell", "声音警报"], ["resend", "重发消息"], ["task", "启停任务"],
];

function Panel({ className = "bg-[#edf2f7]", children }: { className?: string; children: ReactNode }) {
  return <div className={`relative h-[1536px] overflow-hidden ${className}`}>{children}</div>;
}

export default function App() {
  const toTiles = (list: [string, string][]): [ReactNode, string][] => list.map(([id, l]) => [<Tile id={id} />, l]);
  return (
    <div className="w-[4096px] h-[3072px] grid grid-cols-5 [font-family:Roboto,'Noto_Sans_CJK_SC',sans-serif]">
      <Panel className="bg-[#e4f2fb] flex"><Drawer /><Preview /></Panel>
      <Panel>
        <Header title="自动任务·快捷指令" h="h-[126px]" right={
          <svg viewBox="0 0 38 38" className="w-[38px] h-[38px] -mr-[2px]"><path d="M0 19h38M19 0v38" stroke="#fff" strokeWidth="4" /></svg>
        } />
        <TaskList />
      </Panel>
      <Panel><TaskBackdrop /><Sheet title="请选择触发条件" top="top-[739px]" pad="pt-[38px]" gap="mt-[28px]" tiles={toTiles(triggerTiles)} /></Panel>
      <Panel><TaskBackdrop /><Sheet title="请选择动作" top="top-[739px]" pad="pt-[38px]" gap="mt-[28px]" tiles={[...toTiles(actionTiles), [null, ""]]} /></Panel>
      <Panel><Settings /></Panel>
      <Panel><ChannelPanel /></Panel>
      <Panel><Rule /></Panel>
      <Panel><Server /></Panel>
      <Panel><Client /></Panel>
      <Panel><About /></Panel>
    </div>
  );
}
